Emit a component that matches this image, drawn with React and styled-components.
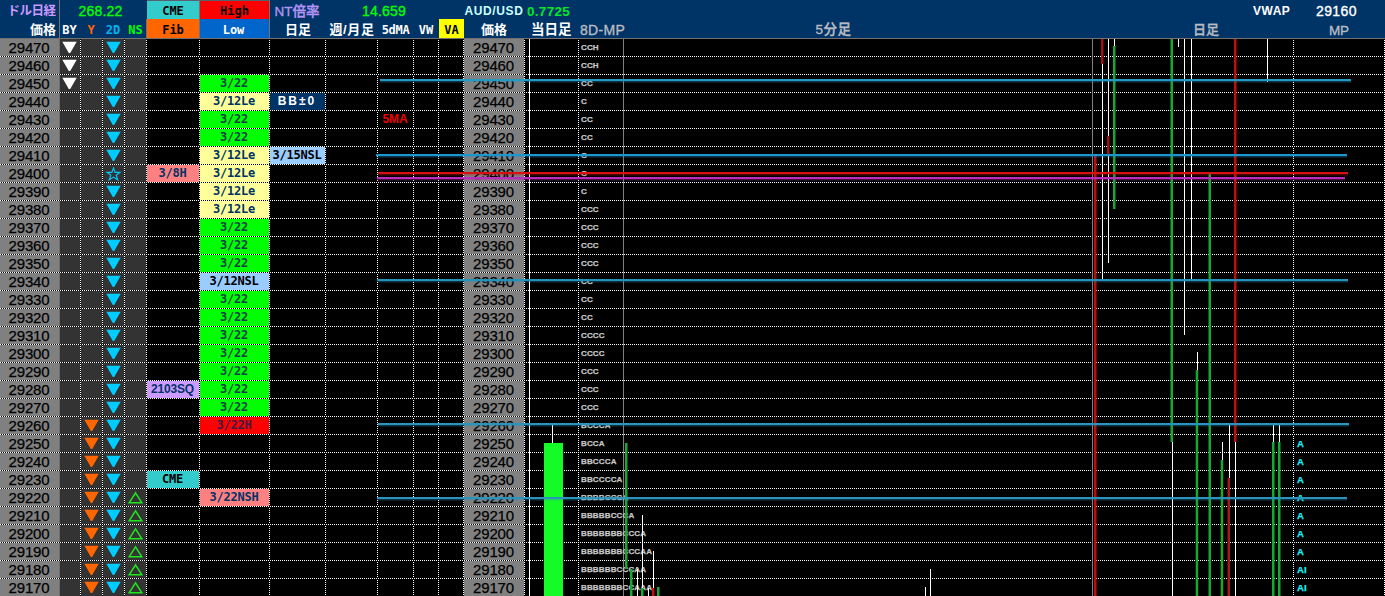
import React from "react";
import styled, { createGlobalStyle, css } from "styled-components";

const Global = createGlobalStyle`
  body { margin: 0; background: #000; overflow: hidden; }
`;

const mono = `"DejaVu Sans Mono", "Noto Sans CJK JP", monospace`;
const sans = `"Liberation Sans", "Noto Sans CJK JP", sans-serif`;

const COLUMNS =
  "60px 21px 22px 22px 22px 53px 70px 56px 52px 36px 25px 25px 61px 5px 49px 45px 469px 201px 91px";

const Board = styled.main`
  width: 1385px;
  height: 596px;
  overflow: hidden;
  background: #000;
  font-family: ${sans};
`;

const Header = styled.header`
  height: 38px;
  background: #003366;
  border-bottom: 1px solid #737373;
`;

const HeaderRow = styled.div`
  display: grid;
  grid-template-columns: ${(p) => p.$cols};
  height: 19px;
`;

const HeadCell = styled.div`
  box-sizing: border-box;
  display: flex;
  align-items: center;
  justify-content: ${(p) => p.$align || "center"};
  height: 19px;
  padding: ${(p) => p.$pad || "0"};
  line-height: 19px;
  white-space: nowrap;
  overflow: visible;
  color: ${(p) => p.$color || "#fff"};
  background: ${(p) => p.$bg || "transparent"};
  font-family: ${(p) => (p.$mono ? mono : sans)};
  font-size: ${(p) => p.$size || (p.$mono ? 12 : 14)}px;
  font-weight: ${(p) => (p.$light ? 500 : 700)};
  letter-spacing: ${(p) => p.$track || 0}px;
  ${(p) => p.$light && css`-webkit-text-stroke: 0.35px currentColor;`}
  ${(p) => p.$line && css`border-right: 1px solid #737373;`}
  ${(p) => p.$top && css`border-top: 1px solid #55616e;`}
`;

const Body = styled.div`
  position: relative;
`;

const Row = styled.div`
  display: grid;
  grid-template-columns: ${COLUMNS};
  height: 18px;
  background: repeating-linear-gradient(90deg, #fff 0 1px, #000 1px 2px);
`;

const edges = {
  dots: "repeating-linear-gradient(180deg, #000 0 1px, #fff 1px 2px)",
  white: "linear-gradient(#fff, #fff)",
  gray: "linear-gradient(#808080, #808080)",
  price: "linear-gradient(#6e6e6e, #6e6e6e)",
};

const isSolid = (p) => p.$edge === "white" || p.$edge === "gray";

/* A solid right edge runs through the dotted row rule; a dotted one stops at it. */
const Cell = styled.div`
  box-sizing: border-box;
  display: flex;
  align-items: center;
  justify-content: center;
  height: 17px;
  padding-right: 2px;
  white-space: nowrap;
  background: ${(p) => edges[p.$edge || "dots"]} right top / 1px 100% no-repeat
    ${(p) => p.$bg || "#000"};
  ${(p) =>
    isSolid(p) &&
    css`
      height: 18px;
      padding-bottom: 1px;
      background:
        ${edges[p.$edge]} right top / 1px 100% no-repeat,
        linear-gradient(#000, #000) left top / 100% 17px no-repeat;
    `}
`;

const Price = styled.span`
  height: 17px;
  font: 15px/17px ${sans};
  letter-spacing: -0.1px;
  color: #000;
  -webkit-text-stroke: 0.25px #000;
`;

const Tag = styled.span`
  font: bold 12px/17px ${(p) => (p.$track === undefined ? mono : sans)};
  letter-spacing: ${(p) => (p.$track === undefined ? -0.2 : p.$track)}px;
  color: ${(p) => p.$color};
`;

const ProfileCell = styled(Cell)`
  position: relative;
  justify-content: flex-start;
  padding-top: 1px;
  padding-left: ${(p) => p.$inset}px;
  font: bold ${(p) => p.$size}px/16px ${sans};
  letter-spacing: 0.15px;
  color: ${(p) => p.$color};
  -webkit-text-stroke: 0.25px currentColor;
`;

const Overlay = styled.svg`
  position: absolute;
  left: 0;
  top: -39px;
  pointer-events: none;
`;

const Down = ({ color }) => (
  <svg width="15" height="13" viewBox="0 0 15 13">
    <path d="M0.3 0.8H14.7L8.2 12H6.8Z" fill={color} />
  </svg>
);
const Up = () => (
  <svg width="15" height="13" viewBox="0 0 15 13">
    <path d="M7.5 1.8L1.3 11.7H13.7Z" fill="none" stroke="#20e620" strokeWidth="1.5" />
  </svg>
);
const Star = () => (
  <svg width="15" height="14" viewBox="0 0 14 13">
    <path
      d="M7 1L8.5 5H13L9.5 7.7L11 12L7 9.4L3 12L4.5 7.7L1 5H5.5Z"
      fill="none"
      stroke="#00c8ff"
      strokeWidth="1.1"
    />
  </svg>
);

const tones = {
  green: ["#00ff00", "#123f4c"],
  cream: ["#ffff99", "#003366"],
  sky: ["#99ccff", "#000"],
  red: ["#ff0000", "#3d1c46"],
  pink: ["#ff8080", "#003366"],
  teal: ["#33cccc", "#000"],
  violet: ["#cc99ff", "#003366"],
  navy: ["#003366", "#fff"],
};

const lows = {
  29450: ["3/22", "green"], 29440: ["3/12Le", "cream"], 29430: ["3/22", "green"],
  29420: ["3/22", "green"], 29410: ["3/12Le", "cream"], 29400: ["3/12Le", "cream"],
  29390: ["3/12Le", "cream"], 29380: ["3/12Le", "cream"], 29370: ["3/22", "green"],
  29360: ["3/22", "green"], 29350: ["3/22", "green"], 29340: ["3/12NSL", "sky"],
  29330: ["3/22", "green"], 29320: ["3/22", "green"], 29310: ["3/22", "green"],
  29300: ["3/22", "green"], 29290: ["3/22", "green"], 29280: ["3/22", "green"],
  29270: ["3/22", "green"], 29260: ["3/22H", "red"], 29220: ["3/22NSH", "pink"],
};
const fibs = {
  29400: ["3/8H", "pink"], 29280: ["2103SQ", "violet", -0.2], 29230: ["CME", "teal"],
};
const dailies = {
  29440: ["BB±0", "navy", 2], 29410: ["3/15NSL", "sky"],
};
const profile = [
  "CCH", "CCH", "CC", "C", "CC", "CC", "C", "C", "C", "CCC", "CCC", "CCC", "CCC", "CC", "CC",
  "CC", "CCCC", "CCCC", "CCC", "CCC", "CCC", "BCCCA", "BCCA", "BBCCCA", "BBCCCCA", "BBBBCCCA",
  "BBBBBCCCA", "BBBBBBBCCCA", "BBBBBBBCCCAA", "BBBBBBCCCAA", "BBBBBBBCCAAA",
];

function TagCell({ entry }) {
  if (!entry) return <Cell />;
  const [text, tone, track] = entry;
  const [bg, color] = tones[tone];
  return (
    <Cell $bg={bg}>
      <Tag $color={color} $track={track}>{text}</Tag>
    </Cell>
  );
}

function PriceRow({ index }) {
  const price = 29470 - index * 10;
  return (
    <Row>
      <Cell $bg="#808080" $edge="price"><Price>{price}</Price></Cell>
      <Cell $bg="#333">{price >= 29450 && <Down color="#fff" />}</Cell>
      <Cell $bg="#333">{price <= 29260 && <Down color="#ff6600" />}</Cell>
      <Cell $bg="#333">{price === 29400 ? <Star /> : <Down color="#00ccff" />}</Cell>
      <Cell $bg="#333">{price <= 29220 && <Up />}</Cell>
      <TagCell entry={fibs[price]} />
      <TagCell entry={lows[price]} />
      <TagCell entry={dailies[price]} />
      <Cell />
      <Cell>{price === 29430 && <Tag $color="#f00000" $track={-0.1}>5MA</Tag>}</Cell>
      <Cell />
      <Cell />
      <Cell $bg="#808080"><Price>{price}</Price></Cell>
      <Cell $edge="white" />
      <Cell />
      <ProfileCell $edge="gray" $inset={2} $size={8} $color="#c8c8c8">{profile[index]}</ProfileCell>
      <Cell $edge="gray" />
      <Cell />
      <ProfileCell $inset={3} $size={9.5} $color="#14f4f8">
        {price <= 29250 && (price <= 29180 ? "AI" : "A")}
      </ProfileCell>
    </Row>
  );
}

// x, top, bottom
const wicks = [
  [552, 425, 444], [637, 569, 596], [642, 515, 596], [648, 588, 596], [653, 551, 596],
  [925, 587, 596], [930, 569, 596], [1102, 64, 280], [1108, 39, 263], [1114, 39, 47],
  [1172, 442, 596], [1178, 39, 47], [1184, 39, 335], [1191, 39, 280], [1197, 352, 371],
  [1222, 442, 461], [1229, 425, 479], [1235, 442, 596], [1267, 39, 82], [1273, 425, 443],
  [1279, 425, 443],
];
const GREEN = "#16a834";
const RED = "#c00c0c";
// x, top, bottom, colour
const bodies = [
  [625, 443, 569, GREEN], [630, 569, 596, GREEN], [641, 588, 596, GREEN],
  [652, 588, 596, RED], [657, 587, 596, GREEN], [1094, 155, 596, RED],
  [1101, 39, 64, "#a01212"], [1107, 136, 154, "#a01212"], [1113, 46, 209, GREEN],
  [1170.5, 39, 442, GREEN], [1195.7, 370, 596, GREEN], [1208.5, 172, 596, GREEN],
  [1220.7, 460, 596, GREEN], [1227.5, 478, 596, "#a81818"], [1234, 39, 442, RED],
  [1272, 442, 596, GREEN], [1278, 442, 596, GREEN],
];
// y, left, right, colour
const levels = [
  [79, 380, 1351, "#259bc4"], [154, 376, 1347, "#1c96cc"], [172, 378, 1348, "#d41212"],
  [177, 377, 1345, "#b92fb9"], [279, 377, 1348, "#2492ba"], [423, 378, 1349, "#2a94bd"],
  [497, 377, 1347, "#2a94bd"],
];

function ChartOverlay() {
  return (
    <Overlay width="1385" height="596" viewBox="0 0 1385 596">
      {wicks.map(([x, a, b]) => (
        <rect key={x} x={x} y={a} width="1" height={b - a} fill="#fff" />
      ))}
      <rect x="544" y="443" width="19" height="153" fill="#14fb28" />
      {bodies.map(([x, a, b, fill]) => (
        <rect key={x} x={x} y={a} width="2.5" height={b - a} fill={fill} />
      ))}
      {levels.map(([y, a, b, fill]) => (
        <g key={y}>
          <rect x={a} y={y + 2} width={b - a} height="1.5" fill={fill} opacity="0.35" />
          <rect x={a} y={y} width={b - a} height="2" fill={fill} />
        </g>
      ))}
    </Overlay>
  );
}

export default function App() {
  return (
    <Board>
      <Global />
      <Header>
        <HeaderRow $cols="60px 87px 53px 70px 56px 116px 22px 61px 705px 80px 75px">
          <HeadCell $line $color="#cc99ff" $size={12.5} $track={-0.5} $pad="3px 2px 0 6px">ドル日経</HeadCell>
          <HeadCell $color="#00ff00" $light $size={14} $track={0.2} $pad="4px 6px 0 0">268.22</HeadCell>
          <HeadCell $mono $line $top $bg="#33cccc" $color="#000" $pad="3px 0 0">CME</HeadCell>
          <HeadCell $mono $line $top $bg="#ff0000" $color="#000" $pad="3px 0 0">High</HeadCell>
          <HeadCell $color="#b394f5" $light $size={13.5} $pad="4px 2px 0 0">NT倍率</HeadCell>
          <HeadCell $color="#00ff00" $light $size={14} $track={0.2} $pad="3px 0 0">14.659</HeadCell>
          <HeadCell />
          <HeadCell $color="#ccffff" $size={12} $track={0.6} $pad="3px 1px 0 0">AUD/USD</HeadCell>
          <HeadCell $color="#00e828" $size={13.5} $track={0.3} $align="flex-start" $pad="4px 0 0 2px">0.7725</HeadCell>
          <HeadCell $size={12} $track={0.5} $align="flex-start" $pad="4px 0 0 23px">VWAP</HeadCell>
          <HeadCell $size={14} $light $align="flex-start" $pad="4px 0 0 6px" $track={0.4}>29160</HeadCell>
        </HeaderRow>
        <HeaderRow $cols={COLUMNS}>
          <HeadCell $line $size={13} $align="flex-end" $pad="2px 3px 0 0">価格</HeadCell>
          <HeadCell $mono $pad="3px 2px 0 0">BY</HeadCell>
          <HeadCell $mono $color="#ff6600" $pad="3px 2px 0 0">Y</HeadCell>
          <HeadCell $mono $color="#00b4f0" $pad="3px 2px 0 0">2D</HeadCell>
          <HeadCell $mono $line $color="#00ff00" $pad="3px 0 0">NS</HeadCell>
          <HeadCell $mono $line $bg="#ff6600" $color="#000" $pad="3px 0 0">Fib</HeadCell>
          <HeadCell $mono $line $bg="#0066cc" $pad="3px 2px 0 0">Low</HeadCell>
          <HeadCell $size={13} $pad="2px 0 0">日足</HeadCell>
          <HeadCell $size={13} $track={0.6} $pad="2px 0 0">週/月足</HeadCell>
          <HeadCell $mono $pad="3px 1px 0 0" $track={-0.3}>5dMA</HeadCell>
          <HeadCell $mono $pad="3px 1px 0 0">VW</HeadCell>
          <HeadCell $mono $bg="#ffff00" $color="#000" $pad="3px 0 0">VA</HeadCell>
          <HeadCell $size={13} $pad="2px 1px 0 0">価格</HeadCell>
          <HeadCell />
          <HeadCell $size={13.5} $align="flex-start" $pad="2px 0 0 1px">当日足</HeadCell>
          <HeadCell $size={14} $light $color="#b8bcc2" $track={0.3} $align="flex-start" $pad="3px 0 0 1px">8D-MP</HeadCell>
          <HeadCell $size={13.5} $light $color="#b8bcc2" $track={0.5} $pad="2px 50px 0 0">5分足</HeadCell>
          <HeadCell $size={13} $light $color="#b8bcc2" $pad="2px 0 0 25px">日足</HeadCell>
          <HeadCell $size={13.5} $light $color="#b8bcc2" $pad="3px 1px 0 0">MP</HeadCell>
        </HeaderRow>
      </Header>
      <Body>
        {profile.map((_, i) => (
          <PriceRow key={i} index={i} />
        ))}
        <ChartOverlay />
      </Body>
    </Board>
  );
}
